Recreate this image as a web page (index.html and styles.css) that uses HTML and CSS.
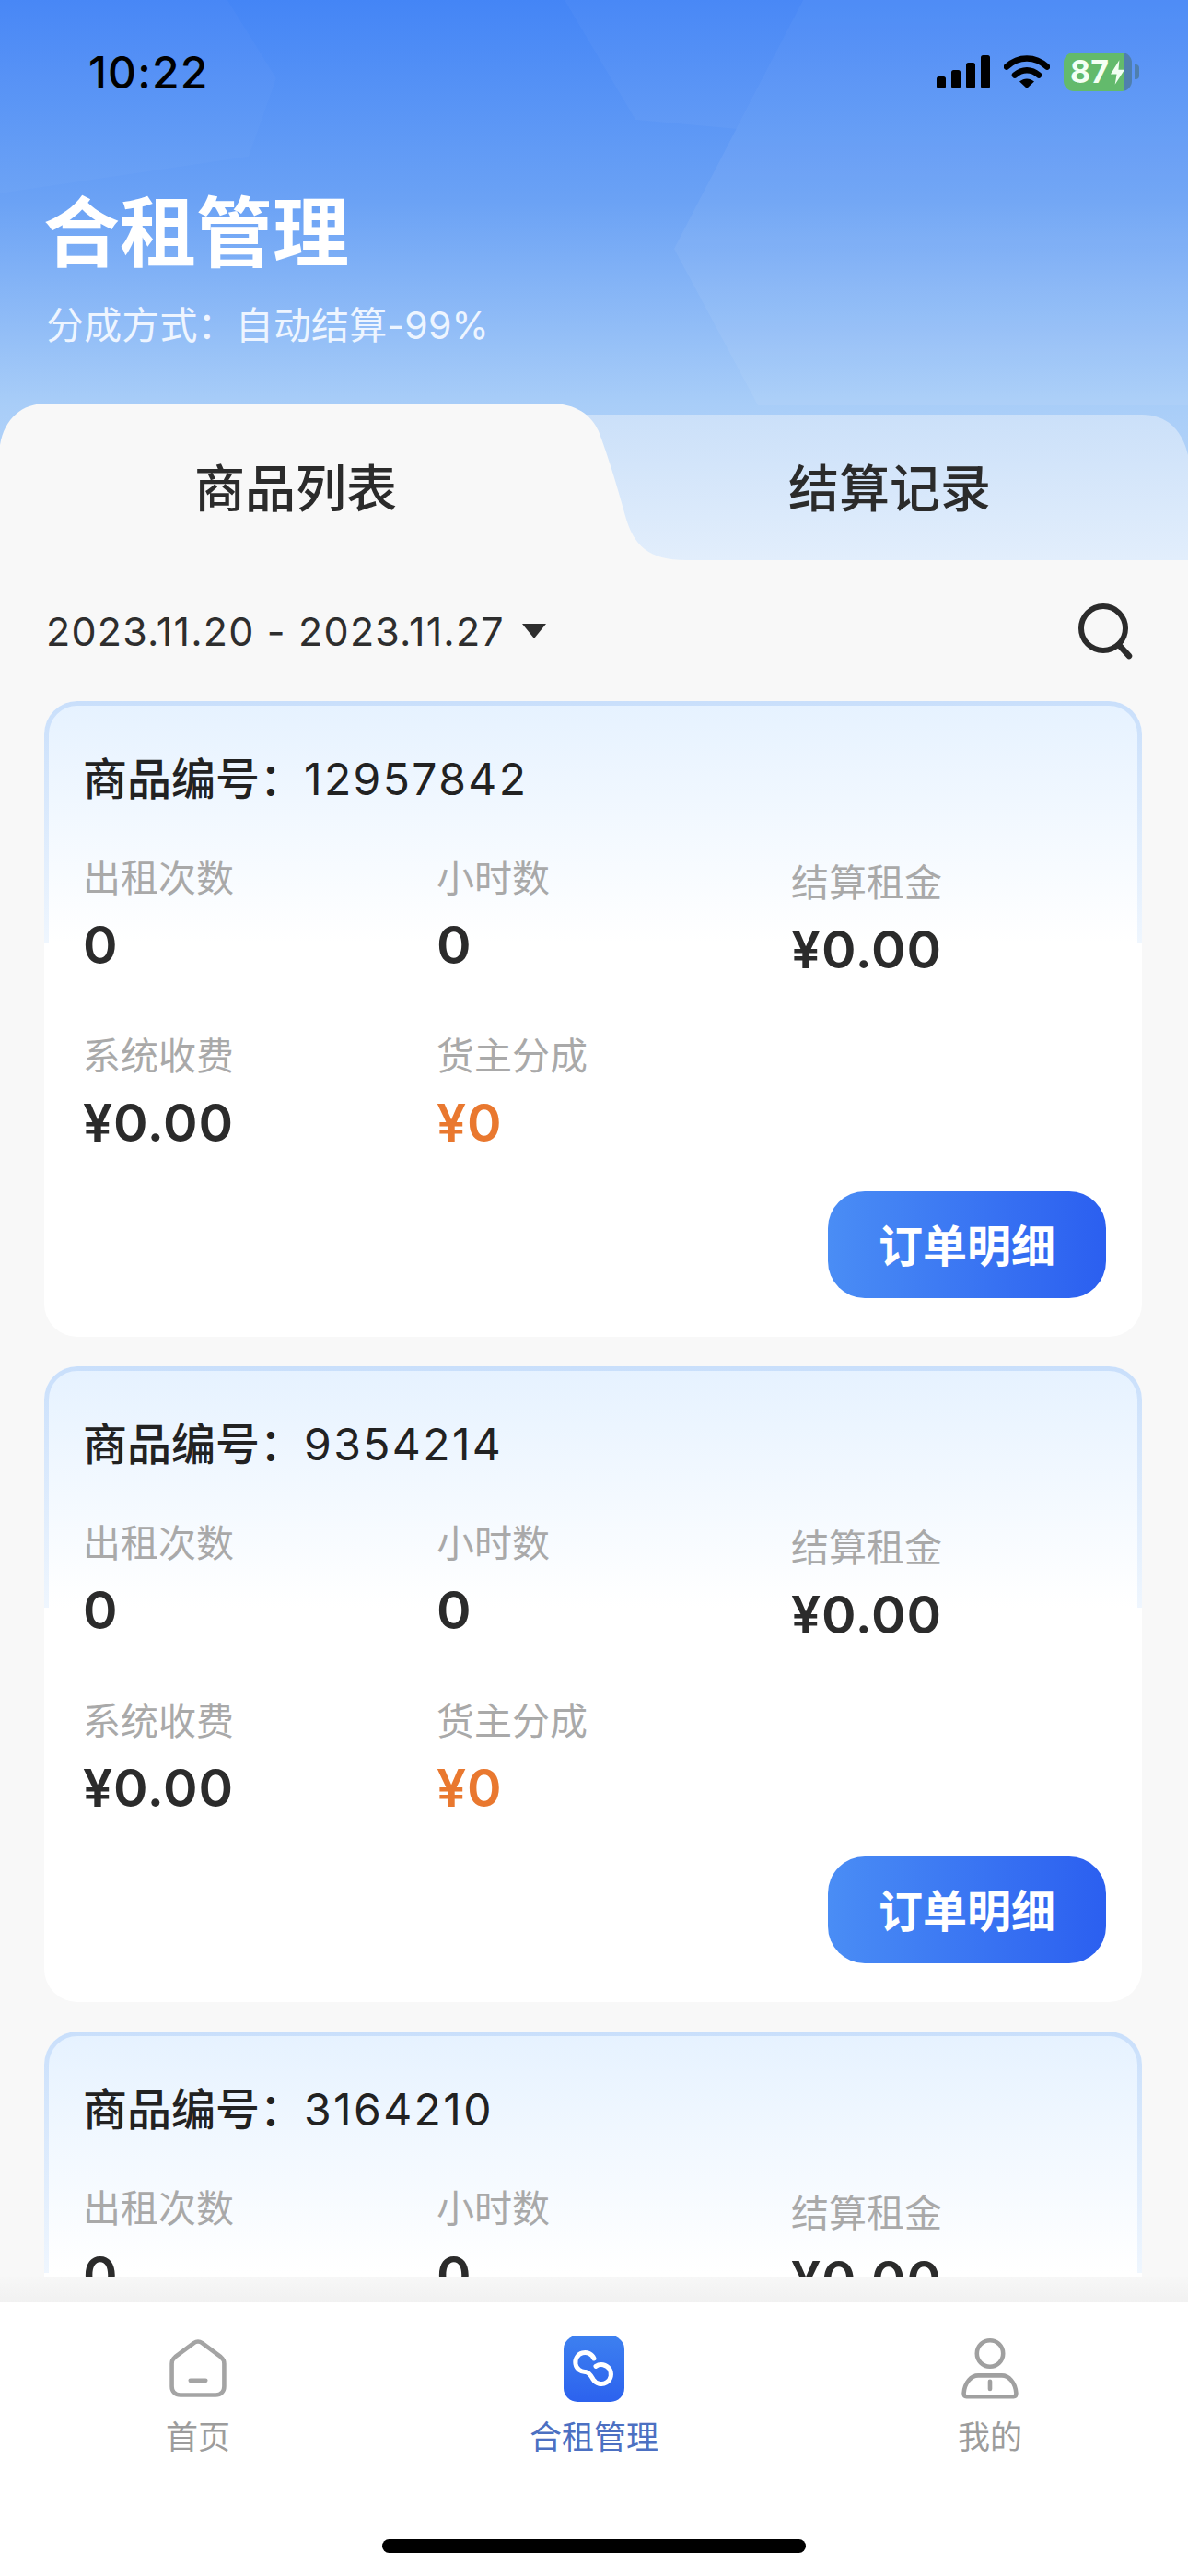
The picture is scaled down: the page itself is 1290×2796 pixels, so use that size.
FILE: index.html
```html
<!DOCTYPE html><html lang="zh-CN">
<head>
  <meta charset="UTF-8">
  <meta name="viewport" content="width=device-width, initial-scale=1.0">
  <title>合租管理</title>
  <link rel="stylesheet" href="styles.css">
</head>
<body>
<div class="page">
  <header class="hero">
    <svg class="hero-facets" viewBox="0 0 1290 608" aria-hidden="true">
      <polygon points="0,0 247,0 300,85 270,170 0,210" fill="#fff" opacity=".025"/>
      <polygon points="613,0 872,0 800,140 690,130" fill="#fff" opacity=".03"/>
      <polygon points="872,0 1290,0 1290,440 823,440 732,270" fill="#fff" opacity=".06"/>
    </svg>
    <div class="status">
      <span class="clock">10:22</span>
      <div class="status-icons">
        <svg class="ic-signal" viewBox="0 0 58 36"><rect x="0" y="23" width="10" height="13" rx="2.5"/><rect x="16" y="16" width="10" height="20" rx="2.5"/><rect x="32" y="8" width="10" height="28" rx="2.5"/><rect x="48" y="0" width="10" height="36" rx="2.5"/></svg>
        <svg class="ic-wifi" viewBox="0 0 50 38"><path d="M3 13.5C16 1.5 34 1.5 47 13.5" fill="none" stroke="#000" stroke-width="6.5" stroke-linecap="round"/><path d="M12 22.5C20 15.5 30 15.5 38 22.5" fill="none" stroke="#000" stroke-width="6.5" stroke-linecap="round"/><path d="M25 37L17 29.5C22 25.5 28 25.5 33 29.5Z"/></svg>
        <div class="battery">
          <span>87</span>
          <svg viewBox="0 0 18 28"><path d="M11 0L1 16H8L6 28L17 11H10Z" fill="#f2fff2"/></svg>
        </div>
      </div>
    </div>
    <h1 class="hero-title">合租管理</h1>
    <p class="hero-sub">分成方式：自动结算-99%</p>
    <div class="tabs">
      <svg class="tabs-shape" viewBox="0 0 1290 170" aria-hidden="true">
        <defs>
          <linearGradient id="tabOff" x1="0" y1="0" x2="0" y2="1">
            <stop offset="0" stop-color="#cbe0f9"/>
            <stop offset="1" stop-color="#e2eefc"/>
          </linearGradient>
        </defs>
        <path d="M620 12H1240C1268 12 1284 30 1290 56V170H620Z" fill="url(#tabOff)"/>
        <path d="M0 170V45C5 16 24 0 50 0H598C625 0 642 12 650 30C662 62 670 90 679 122C688 154 704 170 745 170Z" fill="#f8f8f8"/>
      </svg>
      <div class="tab tab-on">商品列表</div>
      <div class="tab">结算记录</div>
    </div>
  </header>

  <div class="filter">
    <div class="date-range">2023.11.20 - 2023.11.27<i class="caret"></i></div>
    <svg class="ic-search" viewBox="0 0 62 62"><circle cx="29" cy="28" r="24" fill="none" stroke="#2b2b2b" stroke-width="6"/><path d="M46 46L57 58" stroke="#2b2b2b" stroke-width="6.5" stroke-linecap="round"/></svg>
  </div>

  <main class="list">
    <section class="card">
      <div class="card-glow"></div>
      <div class="card-no">商品编号：<span>12957842</span></div>
      <div class="stats">
        <div class="stat"><label>出租次数</label><b>0</b></div>
        <div class="stat"><label>小时数</label><b>0</b></div>
        <div class="stat stat-low"><label>结算租金</label><b>¥0.00</b></div>
        <div class="stat"><label>系统收费</label><b>¥0.00</b></div>
        <div class="stat"><label>货主分成</label><b class="orange">¥0</b></div>
      </div>
      <div class="card-foot"><button class="detail-btn">订单明细</button></div>
    </section>

    <section class="card">
      <div class="card-glow"></div>
      <div class="card-no">商品编号：<span>9354214</span></div>
      <div class="stats">
        <div class="stat"><label>出租次数</label><b>0</b></div>
        <div class="stat"><label>小时数</label><b>0</b></div>
        <div class="stat stat-low"><label>结算租金</label><b>¥0.00</b></div>
        <div class="stat"><label>系统收费</label><b>¥0.00</b></div>
        <div class="stat"><label>货主分成</label><b class="orange">¥0</b></div>
      </div>
      <div class="card-foot"><button class="detail-btn">订单明细</button></div>
    </section>

    <section class="card">
      <div class="card-glow"></div>
      <div class="card-no">商品编号：<span>3164210</span></div>
      <div class="stats">
        <div class="stat"><label>出租次数</label><b>0</b></div>
        <div class="stat"><label>小时数</label><b>0</b></div>
        <div class="stat stat-low"><label>结算租金</label><b>¥0.00</b></div>
        <div class="stat"><label>系统收费</label><b>¥0.00</b></div>
        <div class="stat"><label>货主分成</label><b class="orange">¥0</b></div>
      </div>
      <div class="card-foot"><button class="detail-btn">订单明细</button></div>
    </section>
  </main>

  <div class="nav-shade"></div>
  <nav class="nav">
    <div class="nav-items">
      <div class="nav-item">
        <svg class="nav-ic" viewBox="0 0 72 72" fill="none" stroke="#a4a4a4" stroke-width="5" stroke-linecap="round" stroke-linejoin="round"><path d="M31 5.5C34 3.5 38 3.5 41 5.5L63 22C65.5 24 67 26.5 67 30V57C67 63 63 67 57 67H15C9 67 5 63 5 57V30C5 26.5 6.500 24 9 22Z"/><path d="M27 50H45"/></svg>
        <span>首页</span>
      </div>
      <div class="nav-item nav-on">
        <svg class="nav-ic" viewBox="0 0 66 72">
          <defs><linearGradient id="navBlue" x1="0" y1="0" x2="0" y2="1"><stop offset="0" stop-color="#3d80f0"/><stop offset="1" stop-color="#2c62ee"/></linearGradient></defs>
          <rect width="66" height="72" rx="15" fill="url(#navBlue)"/>
          <path d="M33 25A10.500 10.500 0 1 0 24 39.500C28 40 30 44 32 47.500A10.500 10.500 0 1 0 35 33.400" fill="none" stroke="#fff" stroke-width="5" stroke-linecap="round"/>
        </svg>
        <span>合租管理</span>
      </div>
      <div class="nav-item">
        <svg class="nav-ic" viewBox="0 0 72 72" fill="none" stroke="#a0a0a0" stroke-width="5" stroke-linecap="round" stroke-linejoin="round"><circle cx="36" cy="18" r="15.500"/><path d="M8 69H64C66 69 67 67.500 67 65C66 52 58 44 50 44H22C14 44 6 52 5 65C5 67.500 6 69 8 69Z"/><path d="M36 51V60"/></svg>
        <span>我的</span>
      </div>
    </div>
    <div class="home-bar"></div>
  </nav>
</div>
</body>
</html>
```

FILE: styles.css
```css
* { box-sizing: border-box; }
html, body { margin: 0; padding: 0; }
body { font-family: Inter, "Noto Sans CJK SC", sans-serif; background: #f8f8f8; color: #2b2b2b; }

.page { width: 1290px; height: 2796px; display: flex; flex-direction: column; overflow: hidden; background: #f8f8f8; }

/* header */
.hero { position: relative; height: 608px; flex: none; background: linear-gradient(180deg, #4485f6 0%, #6ba2f5 36%, #a8cdf8 72%, #c4dcfa 100%); }
.hero-facets { position: absolute; left: 0; top: 0; width: 1290px; height: 608px; }
.status { position: relative; height: 156px; display: flex; align-items: center; justify-content: space-between; padding: 0 61px 0 96px; }
.clock { font-size: 48px; font-weight: 500; color: #000; letter-spacing: 1.2px; }
.status-icons { display: flex; align-items: center; }
.ic-signal { width: 58px; height: 36px; }
.ic-wifi { width: 50px; height: 38px; margin: 0 15px; }
.battery { position: relative; width: 74px; height: 42px; border-radius: 11px; background: linear-gradient(90deg, #63ba6c 0 65px, #4f7fae 65px); display: flex; align-items: center; padding-left: 7px; color: #f4fff4; font-size: 34px; font-weight: 700; line-height: 1; }
.battery svg { width: 17px; height: 27px; margin-left: 1px; }
.battery::after { content: ""; position: absolute; right: -8px; top: 13px; width: 5px; height: 16px; border-radius: 0 4px 4px 0; background: #4f7fae; }

.hero-title { position: relative; margin: 52px 0 0 47px; font-size: 83px; line-height: 90px; font-weight: 700; color: #fff; }
.hero-sub { position: relative; margin: 30px 0 0 50px; font-size: 41px; line-height: 50px; letter-spacing: .15px; color: #eef5ff; }

.tabs { position: absolute; left: 0; bottom: 0; width: 1290px; height: 170px; display: grid; grid-template-columns: 642px 648px; }
.tabs-shape { position: absolute; left: 0; top: 0; width: 1290px; height: 170px; }
.tab { position: relative; text-align: center; font-size: 55px; line-height: 70px; padding-top: 57px; font-weight: 500; color: #2b2b2b; }

/* filter row */
.filter { height: 153px; flex: none; display: flex; align-items: center; justify-content: space-between; padding: 0 59px 0 50px; }
.date-range { display: flex; align-items: center; font-size: 43px; letter-spacing: 1.2px; color: #2e2e2e; }
.caret { width: 0; height: 0; margin-left: 19px; border-left: 13px solid transparent; border-right: 13px solid transparent; border-top: 16px solid #2e2e2e; }
.ic-search { width: 62px; height: 62px; }

/* list */
.list { flex: 1; min-height: 0; overflow: hidden; padding: 0 50px 0 48px; display: flex; flex-direction: column; gap: 32px; }
.card { position: relative; flex: none; height: 690px; padding: 55px 42px 0; border-radius: 36px; background: #fff; }
.card-glow { position: absolute; left: 0; top: 0; width: 100%; height: 262px; border: 5px solid transparent; border-bottom: 0; border-radius: 36px 36px 0 0; background: linear-gradient(180deg, #e6f2ff, #ffffff) padding-box, linear-gradient(180deg, #c9dffb, #eff6fe) border-box; }
.card-no, .stats, .card-foot { position: relative; }
.card-no { font-size: 48px; line-height: 60px; font-weight: 500; color: #222; }
.card-no span { font-weight: 400; letter-spacing: 2.4px; }
.stats { display: grid; grid-template-columns: 384px 385px 1fr; row-gap: 58px; margin-top: 52px; }
.stat label { display: block; font-size: 41px; line-height: 50px; color: #a9a9a9; }
.stat b { display: block; margin-top: 16px; font-size: 57px; line-height: 64px; font-weight: 600; letter-spacing: .8px; color: #2b2b2b; }
.stat-low { margin-top: 5px; }
.stat b.orange { color: #e9782f; }
.card-foot { display: flex; justify-content: flex-end; margin-top: 42px; margin-right: -3px; }
.detail-btn { width: 302px; height: 116px; padding: 0 0 5px; border: none; border-radius: 40px; background: linear-gradient(90deg, #4a8df5, #2b5ff0); color: #fff; font-family: inherit; font-size: 48px; font-weight: 700; }

/* bottom nav */
.nav-shade { height: 27px; flex: none; background: linear-gradient(180deg, #f7f7f7, #f1f1f1); }
.nav { height: 297px; flex: none; display: flex; flex-direction: column; background: #fff; }
.nav-items { display: grid; grid-template-columns: 430px 430px 430px; padding-top: 36px; }
.nav-item { display: flex; flex-direction: column; align-items: center; font-size: 35px; line-height: 44px; color: #9c9c9c; }
.nav-ic { width: 66px; height: 72px; margin-bottom: 16px; }
.nav-on { color: #4c70c2; }
.home-bar { width: 460px; height: 15px; margin: auto auto 25px; border-radius: 8px; background: #000; }
```
